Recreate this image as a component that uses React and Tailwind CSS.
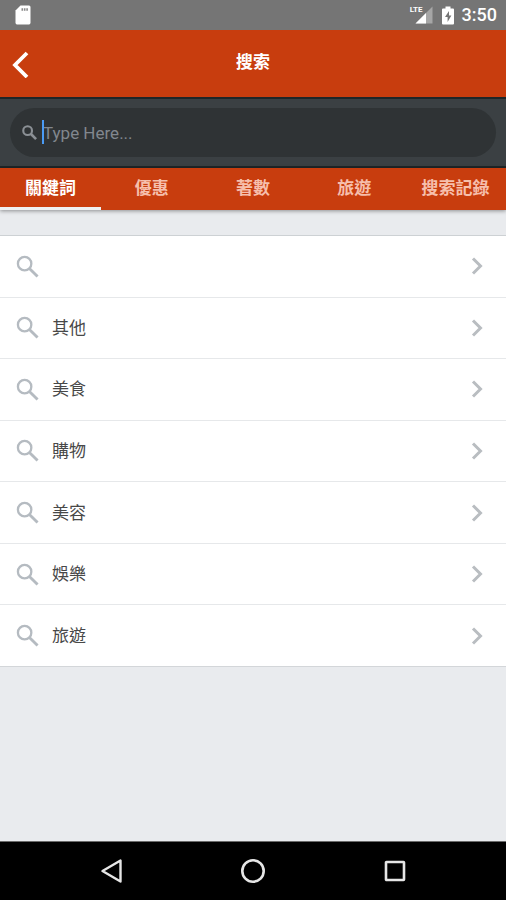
import React, { useState } from 'react'

const tabs = ['關鍵詞', '優惠', '著數', '旅遊', '搜索記錄']

const keywords = ['', '其他', '美食', '購物', '美容', '娛樂', '旅遊']

function SearchIcon({ className, bold }) {
  return (
    <svg viewBox="0 0 24 24" className={className} fill="none" stroke="currentColor" aria-hidden="true">
      <circle cx="9" cy="9" r="7" strokeWidth={bold ? 3.4 : 2.4} />
      <path d="M14 14 L22.5 22.5" strokeWidth={bold ? 4.2 : 3} />
    </svg>
  )
}

function StatusBar() {
  return (
    <div className="flex h-[30px] items-center justify-between bg-[#757575] pl-[15px] pr-[9px] text-white">
      <svg viewBox="0 0 16 20" className="h-5 w-4" aria-hidden="true">
        <path d="M5.5 0.5 H14 Q15.5 0.5 15.5 2 V17.5 Q15.5 19.5 14 19.5 H2 Q0.5 19.5 0.5 17.5 V5.5 Z" fill="#fff" />
        <path d="M6.5 4.5 H13" stroke="#8a8a8a" strokeWidth="2.5" strokeDasharray="1.6 0.8" />
      </svg>
      <div className="flex items-center">
        <div className="flex items-start">
          <span className="-mr-2 text-[8px] font-bold leading-[8px]">LTE</span>
          <svg viewBox="0 0 18 18" className="h-[18px] w-[18px]" aria-hidden="true">
            <path d="M17.5 0.5 V17.5 H0.5 Z" fill="#a6a6a6" />
            <path d="M11 7 V17.5 H0.5 Z" fill="#fff" />
          </svg>
        </div>
        <svg viewBox="0 0 12 19" className="ml-[9px] h-[19px] w-3" aria-hidden="true">
          <path d="M3.5 0.5 H8.5 V2.5 H11 Q12 2.5 12 3.5 V17.5 Q12 18.5 11 18.5 H1 Q0 18.5 0 17.5 V3.5 Q0 2.5 1 2.5 H3.5 Z" fill="#fff" />
          <path d="M7 5 L3 11 H5.6 V16 L9.4 9.6 H7 Z" fill="#757575" />
        </svg>
        <span className="ml-2 text-lg font-medium leading-5">3:50</span>
      </div>
    </div>
  )
}

function Header() {
  return (
    <header className="grid h-[67px] grid-cols-[1fr_auto_1fr] items-center bg-[#c83d0e] text-white">
      <button type="button" aria-label="Back" className="ml-3 w-6">
        <svg viewBox="0 0 18 28" className="h-7 w-[18px]" fill="none" stroke="currentColor" strokeWidth="3.8" aria-hidden="true">
          <path d="M15 3 L3 15 L15 27" />
        </svg>
      </button>
      <h1 className="pb-1 text-[17px] font-bold leading-6">搜索</h1>
    </header>
  )
}

function SearchBar() {
  return (
    <div className="border-y-2 border-[#1f2628] bg-[#3b4043] px-[10px] py-[9px]">
      <label className="relative flex h-[49px] items-center rounded-full bg-[#2f3335] pl-3">
        <SearchIcon className="h-[15px] w-[15px] text-[#8b9095]" bold />
        <input
          type="text"
          aria-label="Search"
          placeholder="Type Here..."
          className="ml-[6px] min-w-0 flex-1 bg-transparent text-[17px] leading-6 text-white outline-none placeholder:text-[#81878e]"
        />
        {/* text caret */}
        <span className="absolute left-8 top-3 h-6 w-[2px] bg-[#4a9bf5]" />
      </label>
    </div>
  )
}

function Tabs({ active, onChange }) {
  return (
    <nav className="z-10 grid grid-cols-5 bg-[#c83d0e] shadow-[0_1px_4px_rgba(0,0,0,0.4)]">
      {tabs.map((tab, index) => (
        <button
          key={tab}
          type="button"
          onClick={() => onChange(index)}
          className={`h-[42px] whitespace-nowrap border-b-[3px] text-[17px] font-bold leading-6 ${
            active === index ? 'border-[#eef0f2] text-white' : 'border-transparent text-[#f6bfac]'
          }`}
        >
          {tab}
        </button>
      ))}
    </nav>
  )
}

function KeywordList() {
  return (
    <ul className="mt-[25px] grid min-h-[432px] auto-rows-fr border-t border-[#cdd1d4] bg-white">
      {keywords.map((keyword, index) => (
        <li key={index} className="border-b border-[#e6e8ea] last:border-[#d3d6d9]">
          <button
            type="button"
            aria-label={keyword || 'All'}
            className="flex h-full w-full items-center pl-4 pr-[23px] text-left"
          >
            <SearchIcon className="h-[23px] w-[23px] text-[#b5bbc1]" />
            <span className="ml-[13px] flex-1 text-[17px] leading-6 text-[#484848]">{keyword}</span>
            <svg viewBox="0 0 12 18" className="h-[18px] w-3" fill="none" stroke="#b9bdc1" strokeWidth="3" aria-hidden="true">
              <path d="M2 1.5 L9.5 9 L2 16.5" />
            </svg>
          </button>
        </li>
      ))}
    </ul>
  )
}

function NavigationBar() {
  return (
    <div className="grid h-[59px] grid-cols-[1fr_auto_1fr] items-center border-t border-[#6b6b6b] bg-black px-[100px] text-[#e6e6e6]">
      <button type="button" aria-label="Back" className="justify-self-start">
        <svg viewBox="0 0 24 26" className="h-[26px] w-6" fill="none" stroke="currentColor" strokeWidth="2.4" strokeLinejoin="round" aria-hidden="true">
          <path d="M20.5 2.5 V23.5 L2.5 13 Z" />
        </svg>
      </button>
      <button type="button" aria-label="Home">
        <svg viewBox="0 0 26 26" className="h-[26px] w-[26px]" fill="none" stroke="currentColor" strokeWidth="2.6" aria-hidden="true">
          <circle cx="13" cy="13" r="10.7" />
        </svg>
      </button>
      <button type="button" aria-label="Recent apps" className="justify-self-end">
        <svg viewBox="0 0 22 22" className="h-[22px] w-[22px]" fill="none" stroke="currentColor" strokeWidth="2.6" aria-hidden="true">
          <rect x="2" y="2" width="18" height="18" rx="0.5" />
        </svg>
      </button>
    </div>
  )
}

function App() {
  const [activeTab, setActiveTab] = useState(0)

  return (
    <div className="flex min-h-screen flex-col bg-[#e9ebee] font-[Roboto,'Noto_Sans_CJK_TC',sans-serif]">
      <StatusBar />
      <Header />
      <SearchBar />
      <Tabs active={activeTab} onChange={setActiveTab} />
      <main className="flex-1">
        <KeywordList />
      </main>
      <NavigationBar />
    </div>
  )
}

export default App
